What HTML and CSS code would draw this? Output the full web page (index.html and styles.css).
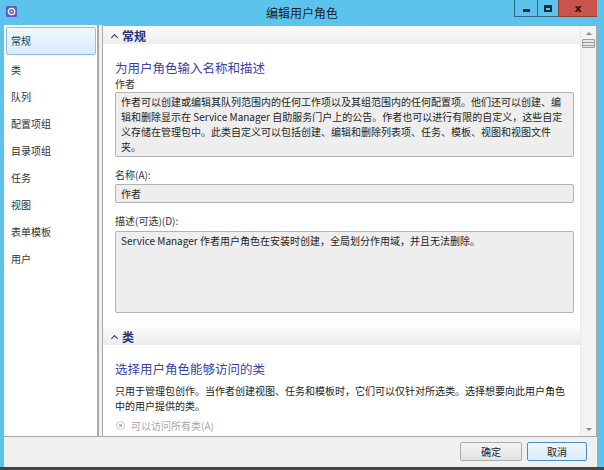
FILE: index.html
```html
<!DOCTYPE html>
<html lang="zh-CN">
  <head>
    <meta charset="UTF-8" />
    <title>编辑用户角色</title>
    <link rel="stylesheet" href="styles.css">
  </head>
  <body>
    <div class="window">
      <div class="titlebar">
        <svg class="app-icon" width="11" height="11" viewBox="0 0 11 11">
          <rect x="0" y="0" width="11" height="11" rx="1.5" fill="#5a5cc2" />
          <circle cx="5.5" cy="5.5" r="3.2" fill="none" stroke="#fff" stroke-width="1.3" />
          <circle cx="5.5" cy="5.5" r="1.1" fill="#fff" />
        </svg>
        <div class="title">编辑用户角色</div>
        <div class="controls">
          <span class="ctl ctl-min"><i></i></span>
          <span class="ctl ctl-max"><i></i></span>
          <span class="ctl ctl-close">x</span>
        </div>
      </div>

      <div class="client">
        <ul class="nav">
          <li class="active">常规</li>
          <li>类</li>
          <li>队列</li>
          <li>配置项组</li>
          <li>目录项组</li>
          <li>任务</li>
          <li>视图</li>
          <li>表单模板</li>
          <li>用户</li>
        </ul>

        <div class="main">
          <div class="content">
            <div class="section-head"><span class="caret"></span>常规</div>
            <div class="section">
              <h3>为用户角色输入名称和描述</h3>
              <div class="label">作者</div>
              <div class="box box-info">
                作者可以创建或编辑其队列范围内的任何工作项以及其组范围内的任何配置项。他们还可以创建、编<br>
                辑和删除显示在 Service Manager 自助服务门户上的公告。作者也可以进行有限的自定义，这些自定<br>
                义存储在管理包中。此类自定义可以包括创建、编辑和删除列表项、任务、模板、视图和视图文件<br>
                夹。
              </div>

              <div class="label label-gap">名称(A):</div>
              <div class="box box-input">作者</div>

              <div class="label label-gap">描述(可选)(D):</div>
              <div class="box box-area">Service Manager 作者用户角色在安装时创建，全局划分作用域，并且无法删除。</div>
            </div>

            <div class="section-head section-head-2"><span class="caret"></span>类</div>
            <div class="section">
              <h3>选择用户角色能够访问的类</h3>
              <p class="desc">只用于管理包创作。当作者创建视图、任务和模板时，它们可以仅针对所选类。选择想要向此用户角色<br>中的用户提供的类。</p>
              <div class="radio"><span class="dot"></span>可以访问所有类(A)</div>
            </div>
          </div>

          <div class="scrollbar">
            <span class="arrow arrow-up"></span>
            <span class="thumb"></span>
            <span class="spacer"></span>
            <span class="arrow arrow-down"></span>
          </div>
        </div>
      </div>

      <div class="footer">
        <button class="btn">确定</button>
        <button class="btn btn-focus">取消</button>
      </div>
    </div>
  </body>
</html>
```

FILE: styles.css
```css
* {
  margin: 0;
  padding: 0;
  box-sizing: border-box;
}
body {
  width: 604px;
  height: 470px;
  overflow: hidden;
  font-family: "Noto Sans CJK SC", "Noto Sans", sans-serif;
  font-size: 10px;
  color: #222;
  background: #5cc4ec;
}
.window {
  height: 470px;
  display: flex;
  flex-direction: column;
  background: #5cc4ec;
  border-bottom: 3px solid #444;
}

/* title bar */
.titlebar {
  height: 25px;
  display: grid;
  grid-template-columns: 1fr auto 1fr;
  align-items: start;
}
.app-icon {
  margin: 6px 0 0 6px;
}
.title {
  font-size: 12px;
  line-height: 26px;
  color: #1b1b1b;
}
.controls {
  justify-self: end;
  display: flex;
  margin-right: 7px;
}
.ctl {
  height: 17px;
  display: flex;
  align-items: center;
  justify-content: center;
  border: 1px solid #2f6a8c;
  border-top: none;
  border-right: none;
}
.ctl-min {
  width: 23px;
}
.ctl-min i {
  width: 7px;
  height: 3px;
  margin-top: 4px;
  background: #1c2a33;
}
.ctl-max {
  width: 21px;
}
.ctl-max i {
  width: 8px;
  height: 7px;
  border: 2px solid #1c2a33;
  border-top-width: 3px;
}
.ctl-close {
  width: 39px;
  background: #c9544c;
  border-color: #8e3a35;
  font-weight: bold;
  font-size: 11px;
  line-height: 1;
  color: #2a1111;
  font-family: "DejaVu Sans", sans-serif;
}

/* client area */
.client {
  flex: 1;
  display: flex;
  gap: 3px;
  margin: 0 7px 0 4px;
  background: #f0f0f0;
}
.nav {
  width: 95px;
  list-style: none;
  background: #fff;
  border-right: 2px solid #a9a9a9;
  padding: 2px 1px 0 2px;
}
.nav li {
  height: 27px;
  line-height: 27px;
  padding-left: 5px;
  color: #333;
}
.nav li.active {
  height: 28px;
  line-height: 26px;
  margin-bottom: 1px;
  padding-left: 4px;
  border: 1px solid #8fbde8;
  border-radius: 2px;
  background: linear-gradient(#f0f7fe, #d9ebfb);
}
.main {
  flex: 1;
  display: flex;
  background: #fff;
  border: 1px solid #a9a9a9;
  border-bottom: none;
  overflow: hidden;
}
.content {
  flex: 1;
  overflow: hidden;
}
.section-head {
  height: 18px;
  display: flex;
  align-items: center;
  padding-left: 8px;
  font-size: 12px;
  font-weight: bold;
  color: #27307a;
  background: linear-gradient(#fbfbfb, #ececec);
}
.section-head-2 {
  margin-top: 14px;
}
.caret {
  width: 5px;
  height: 5px;
  margin: 4px 5px 0 1px;
  border-left: 1.5px solid #27307a;
  border-top: 1.5px solid #27307a;
  transform: rotate(45deg);
}
.section {
  padding: 0 6px 0 12px;
}
.section h3 {
  font-size: 12.5px;
  font-weight: normal;
  line-height: 18px;
  color: #3b40a8;
  margin-top: 15px;
}
.label {
  line-height: 14px;
  color: #333;
}
.label-gap {
  margin-top: 11px;
}
.box {
  margin-top: 1px;
  background: #eeeeee;
  border: 1px solid #b3b3b3;
  border-radius: 2px;
  padding: 1px 5px 2px;
  line-height: 15px;
  color: #1e1e1e;
}
.box-info {
  height: 65px;
}
.box-input {
  height: 19px;
  line-height: 16px;
  margin-top: 2px;
}
.box-area {
  height: 82px;
  margin-top: 3px;
}
.desc {
  margin-top: 5px;
  line-height: 15px;
}
.radio {
  margin-top: 5px;
  line-height: 15px;
  color: #a8a8a8;
  display: flex;
  align-items: center;
}
.dot {
  width: 9px;
  height: 9px;
  margin: 0 6px 0 1px;
  border: 1px solid #c4c4c4;
  border-radius: 50%;
  background: radial-gradient(circle, #b9b9b9 0 1.5px, #fff 2px);
}

/* scrollbar */
.scrollbar {
  width: 16px;
  display: flex;
  flex-direction: column;
  align-items: center;
  background: #f3f3f3;
  border-left: 1px solid #e8e8e8;
}
.arrow {
  width: 0;
  height: 0;
  border-left: 3px solid transparent;
  border-right: 3px solid transparent;
}
.arrow-up {
  margin-top: 6px;
  border-bottom: 3px solid #8a8a8a;
}
.arrow-down {
  margin-bottom: 5px;
  border-top: 3px solid #8a8a8a;
}
.thumb {
  width: 13px;
  height: 9px;
  margin-top: 4px;
  border: 1px solid #9c9c9c;
  border-radius: 1px;
  background: repeating-linear-gradient(#e8e8e8 0 2px, #9c9c9c 2px 3px);
}
.spacer {
  flex: 1;
}

/* footer */
.footer {
  height: 31px;
  margin: 0 7px 0 4px;
  background: #f0f0f0;
  border-top: 1px solid #a9a9a9;
  display: flex;
  justify-content: flex-end;
  gap: 5px;
  padding: 5px 10px 0 0;
}
.btn {
  width: 62px;
  height: 19px;
  font-family: "Noto Sans CJK SC", sans-serif;
  font-size: 10px;
  color: #222;
  border: 1px solid #acacac;
  border-radius: 2px;
  background: linear-gradient(#f4f4f4, #e2e2e2);
}
.btn-focus {
  width: 60px;
  border-color: #4a8fc4;
  background: linear-gradient(#eef6fc, #dcecf8);
}
```
